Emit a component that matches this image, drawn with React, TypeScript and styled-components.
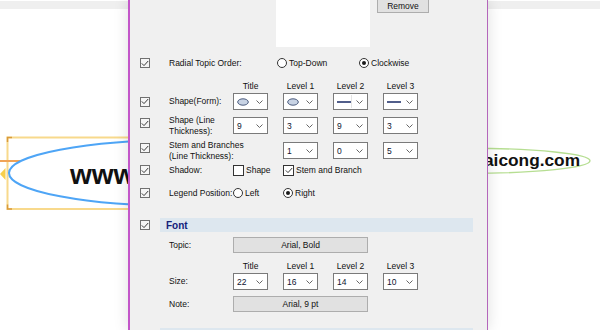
import React from 'react';
import styled, { createGlobalStyle } from 'styled-components';

const GlobalStyle = createGlobalStyle`
  html, body {
    margin: 0;
    padding: 0;
    background: #ffffff;
  }
  body {
    width: 600px;
    height: 330px;
    overflow: hidden;
    font-family: "Liberation Sans", Arial, sans-serif;
  }
`;

const Stage = styled.div`
  position: relative;
  width: 600px;
  height: 330px;
  overflow: hidden;
  background: #ffffff;
`;

const TopStrip = styled.div`
  height: 8px;
  margin-top: 1px;
  background: #efefef;
`;

const MapDrawing = styled.svg`
  position: absolute;
  left: 0;
  top: 0;
`;

const TopicText = styled.div<{ $x: number; $y: number; $size: number }>`
  position: absolute;
  left: ${(p) => p.$x}px;
  top: ${(p) => p.$y}px;
  font-family: "Liberation Sans", Arial, sans-serif;
  font-weight: bold;
  font-size: ${(p) => p.$size}px;
  line-height: 1;
  color: #111111;
  white-space: nowrap;
`;

const Dialog = styled.div`
  position: absolute;
  left: 128px;
  top: 0;
  width: 357px;
  height: 330px;
  background: #f0f0f0;
  border-left: 2px solid #c356c9;
  border-right: 1px solid #b466bb;
  box-shadow: 0 0 14px rgba(0, 0, 0, 0.13);
  overflow: hidden;
  font-family: "Liberation Sans", Arial, sans-serif;
  font-size: 8.5px;
  color: #111111;
`;

const Body = styled.div`
  display: flex;
  flex-direction: column;
  padding-left: 10px;
`;

const TopArea = styled.div`
  display: flex;
  align-items: flex-start;
  height: 50px;
  padding-left: 136px;
`;

const Preview = styled.div`
  width: 94px;
  height: 47px;
  background: #ffffff;
`;

const PushButton = styled.div<{ $w: number; $h: number }>`
  box-sizing: border-box;
  width: ${(p) => p.$w}px;
  height: ${(p) => p.$h}px;
  background: #e1e1e1;
  border: 1px solid #adadad;
  display: flex;
  align-items: center;
  justify-content: center;
  color: #111111;
`;

const RemoveButton = styled(PushButton)`
  margin-left: 7px;
  margin-top: -5px;
  padding-top: 4px;
`;

const Row = styled.div<{ $h: number; $mt: number }>`
  display: flex;
  align-items: center;
  height: ${(p) => p.$h}px;
  margin-top: ${(p) => p.$mt}px;
`;

const CheckCell = styled.div<{ $top?: boolean; $w?: number }>`
  width: ${(p) => p.$w ?? 29}px;
  flex: none;
  align-self: ${(p) => (p.$top ? 'flex-start' : 'center')};
  margin-top: ${(p) => (p.$top ? '1px' : '0')};
  display: flex;
`;

const Box = styled.div<{ $size: number; $dark?: boolean }>`
  box-sizing: border-box;
  width: ${(p) => p.$size}px;
  height: ${(p) => p.$size}px;
  border: 1px solid ${(p) => (p.$dark ? '#333333' : '#707070')};
  background: ${(p) => (p.$dark ? '#ffffff' : '#f6f6f6')};
  display: flex;
  align-items: center;
  justify-content: center;
  flex: none;
`;

const Label = styled.div<{ $w: number }>`
  width: ${(p) => p.$w}px;
  flex: none;
  line-height: 10.5px;
`;

const NoWrap = styled.span`
  white-space: nowrap;
`;

const Cell = styled.div`
  width: 50px;
  flex: none;
  display: flex;
  align-items: center;
`;

const WideCell = styled.div<{ $w: number }>`
  width: ${(p) => p.$w}px;
  flex: none;
  display: flex;
  align-items: center;
`;

const HeaderText = styled.div`
  width: 35px;
  text-align: center;
  line-height: 12px;
  white-space: nowrap;
`;

const SelectBox = styled.div`
  box-sizing: border-box;
  width: 35px;
  height: 17px;
  border: 1px solid #7a7a7a;
  background: #ffffff;
  display: flex;
  align-items: center;
  padding: 0 4px 0 3px;
`;

const SelectValue = styled.div`
  flex: 1;
  display: flex;
  align-items: center;
  color: #0d1430;
  font-size: 8.5px;
`;

const Divider = styled.div`
  width: 1px;
  height: 13px;
  background: #e4e4e4;
  margin-right: 4px;
`;

const RadioDot = styled.div<{ $on?: boolean }>`
  box-sizing: border-box;
  width: 10px;
  height: 10px;
  border-radius: 50%;
  border: 1px solid #333333;
  background: #ffffff;
  display: flex;
  align-items: center;
  justify-content: center;
  flex: none;

  &::after {
    content: '';
    display: ${(p) => (p.$on ? 'block' : 'none')};
    width: 4px;
    height: 4px;
    border-radius: 50%;
    background: #1a1a1a;
  }
`;

const OptionText = styled.span`
  margin-left: 2px;
  white-space: nowrap;
`;

const SectionBar = styled.div`
  box-sizing: border-box;
  width: 313px;
  height: 14px;
  flex: none;
  background: #dde7ef;
  display: flex;
  align-items: center;
  padding-left: 6px;
  font-size: 10px;
  font-weight: bold;
  color: #14207a;
`;

const SectionRow = styled.div<{ $mt: number }>`
  display: flex;
  align-items: center;
  height: 14px;
  margin-top: ${(p) => p.$mt}px;
`;

const Check = () => (
  <svg width="8" height="7" viewBox="0 0 8 7">
    <polyline points="0.8,3.4 3,5.6 7.2,1" fill="none" stroke="#3a3a3a" strokeWidth="1" />
  </svg>
);

const Chevron = () => (
  <svg width="7" height="4" viewBox="0 0 7 4">
    <polyline points="0.5,0.5 3.5,3.5 6.5,0.5" fill="none" stroke="#666666" strokeWidth="1" />
  </svg>
);

const EllipseIcon = () => (
  <svg width="12" height="8" viewBox="0 0 12 8">
    <ellipse cx="6" cy="4" rx="5.3" ry="3.2" fill="#c8d3e4" stroke="#4c5c7e" strokeWidth="1" />
  </svg>
);

const LineIcon = () => (
  <svg width="14" height="4" viewBox="0 0 14 4">
    <line x1="0" y1="2" x2="14" y2="2" stroke="#26366e" strokeWidth="1.6" />
  </svg>
);

type SelectProps = { children?: React.ReactNode; split?: boolean };

const Select = ({ children, split }: SelectProps) => (
  <SelectBox>
    <SelectValue>{children}</SelectValue>
    {split && <Divider />}
    <Chevron />
  </SelectBox>
);

const SideCheck = ({ top, w }: { top?: boolean; w?: number }) => (
  <CheckCell $top={top} $w={w}>
    <Box $size={10}>
      <Check />
    </Box>
  </CheckCell>
);

const levels = ['Title', 'Level 1', 'Level 2', 'Level 3'];

const HeaderRow = ({ mt }: { mt: number }) => (
  <Row $h={12} $mt={mt}>
    <CheckCell />
    <Label $w={64} />
    {levels.map((l) => (
      <Cell key={l}>
        <HeaderText>{l}</HeaderText>
      </Cell>
    ))}
  </Row>
);

const SelectCells = ({ values }: { values: (string | null)[] }) => (
  <>
    {values.map((v, i) => (
      <Cell key={i}>{v !== null && <Select>{v}</Select>}</Cell>
    ))}
  </>
);

const MindMap = () => (
  <>
    <MapDrawing width="600" height="330" viewBox="0 0 600 330">
      <rect x="7.5" y="137.5" width="200" height="71.5" fill="none" stroke="#f8d98c" strokeWidth="2" />
      <polyline points="7.5,142 7.5,137.5 12,137.5" fill="none" stroke="#d99a3c" strokeWidth="1.5" />
      <polyline points="7.5,204.5 7.5,209 12,209" fill="none" stroke="#d99a3c" strokeWidth="1.5" />
      <line x1="0" y1="161" x2="20" y2="161" stroke="#f0a356" strokeWidth="2" />
      <polygon points="0,174 5.5,168 5.5,180" fill="#f8cf4c" />
      <ellipse cx="183" cy="173" rx="174" ry="33" fill="#ffffff" stroke="#4ea5f6" strokeWidth="2" />
      <ellipse cx="470" cy="160.8" rx="120" ry="12.5" fill="#ffffff" stroke="#b6de92" strokeWidth="1.4" />
    </MapDrawing>
    <TopicText $x={70} $y={161} $size={28}>
      www.
    </TopicText>
    <TopicText $x={484} $y={152} $size={17.3}>
      aicong.com
    </TopicText>
  </>
);

const App = () => {
  return (
    <Stage>
      <GlobalStyle />
      <TopStrip />
      <MindMap />
      <Dialog>
        <Body>
          <TopArea>
            <Preview />
            <RemoveButton $w={52} $h={18}>
              Remove
            </RemoveButton>
          </TopArea>

          <Row $h={26} $mt={0}>
            <SideCheck />
            <Label $w={108}>Radial Topic Order:</Label>
            <WideCell $w={82}>
              <RadioDot />
              <OptionText>Top-Down</OptionText>
            </WideCell>
            <WideCell $w={80}>
              <RadioDot $on />
              <OptionText>Clockwise</OptionText>
            </WideCell>
          </Row>

          <HeaderRow mt={4} />

          <Row $h={17} $mt={1}>
            <SideCheck />
            <Label $w={64}>Shape(Form):</Label>
            <Cell>
              <Select>
                <EllipseIcon />
              </Select>
            </Cell>
            <Cell>
              <Select>
                <EllipseIcon />
              </Select>
            </Cell>
            <Cell>
              <Select split>
                <LineIcon />
              </Select>
            </Cell>
            <Cell>
              <Select>
                <LineIcon />
              </Select>
            </Cell>
          </Row>

          <Row $h={17} $mt={7}>
            <SideCheck top />
            <Label $w={64}>
              Shape (Line
              <br />
              Thickness):
            </Label>
            <SelectCells values={['9', '3', '9', '3']} />
          </Row>

          <Row $h={17} $mt={8}>
            <SideCheck top />
            <Label $w={64}>
              <NoWrap>Stem and Branches</NoWrap>
              <br />
              <NoWrap>(Line Thickness):</NoWrap>
            </Label>
            <SelectCells values={[null, '1', '0', '5']} />
          </Row>

          <Row $h={16} $mt={3}>
            <SideCheck />
            <Label $w={64}>Shadow:</Label>
            <Cell>
              <Box $size={11} $dark />
              <OptionText>Shape</OptionText>
            </Cell>
            <WideCell $w={120}>
              <Box $size={11} $dark>
                <Check />
              </Box>
              <OptionText>Stem and Branch</OptionText>
            </WideCell>
          </Row>

          <Row $h={16} $mt={7}>
            <SideCheck />
            <Label $w={64}>
              <NoWrap>Legend Position:</NoWrap>
            </Label>
            <Cell>
              <RadioDot />
              <OptionText>Left</OptionText>
            </Cell>
            <Cell>
              <RadioDot $on />
              <OptionText>Right</OptionText>
            </Cell>
          </Row>

          <SectionRow $mt={17}>
            <SideCheck w={20} />
            <SectionBar>Font</SectionBar>
          </SectionRow>

          <Row $h={16} $mt={5}>
            <CheckCell />
            <Label $w={64}>Topic:</Label>
            <PushButton $w={135} $h={16}>
              Arial, Bold
            </PushButton>
          </Row>

          <HeaderRow mt={7} />

          <Row $h={17} $mt={1}>
            <CheckCell />
            <Label $w={64}>Size:</Label>
            <SelectCells values={['22', '16', '14', '10']} />
          </Row>

          <Row $h={16} $mt={6}>
            <CheckCell />
            <Label $w={64}>Note:</Label>
            <PushButton $w={135} $h={16}>
              Arial, 9 pt
            </PushButton>
          </Row>

          <SectionRow $mt={16}>
            <SideCheck w={20} />
            <SectionBar />
          </SectionRow>
        </Body>
      </Dialog>
    </Stage>
  );
};

export default App;
